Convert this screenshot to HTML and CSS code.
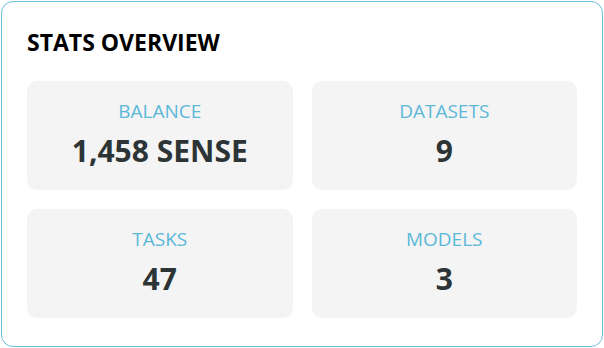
FILE: index.html
```
<!doctype html>
<html lang="en">
  <head>
    <meta charset="UTF-8" />
    <meta name="viewport" content="width=device-width, initial-scale=1.0" />
    <title>Stats Overview</title>
    <link rel="stylesheet" href="styles.css">
  </head>
  <body>
    <div class="panel">
      <h2 class="panel-title">STATS OVERVIEW</h2>
      <div class="stats-grid">
        <div class="stat-card">
          <div class="stat-label">BALANCE</div>
          <div class="stat-value">1,458 SENSE</div>
        </div>
        <div class="stat-card">
          <div class="stat-label">DATASETS</div>
          <div class="stat-value">9</div>
        </div>
        <div class="stat-card">
          <div class="stat-label">TASKS</div>
          <div class="stat-value">47</div>
        </div>
        <div class="stat-card">
          <div class="stat-label">MODELS</div>
          <div class="stat-value">3</div>
        </div>
      </div>
    </div>
  </body>
</html>
```

FILE: styles.css
```
* {
  margin: 0;
  padding: 0;
  box-sizing: border-box;
}

body {
  font-family: 'Open Sans', 'Noto Sans', sans-serif;
  background: #ffffff;
  padding: 1px;
}

.panel {
  height: 346px;
  border: 1px solid #6bbfdc;
  border-radius: 12px;
  padding: 24px 25px 28px 25px;
  background: #ffffff;
}

.panel-title {
  font-size: 23px;
  font-weight: 700;
  color: #000000;
  line-height: 32px;
  margin-bottom: 23px;
}

.stats-grid {
  display: grid;
  grid-template-columns: 1fr 1fr;
  gap: 19px;
}

.stat-card {
  background: #f4f4f4;
  border-radius: 10px;
  height: 109px;
  display: flex;
  flex-direction: column;
  align-items: center;
  padding-top: 17px;
}

.stat-label {
  font-size: 19px;
  color: #5bb8d8;
  line-height: 26px;
}

.stat-value {
  font-size: 30px;
  font-weight: 700;
  color: #2d3436;
  line-height: 40px;
  margin-top: 7px;
}
```
